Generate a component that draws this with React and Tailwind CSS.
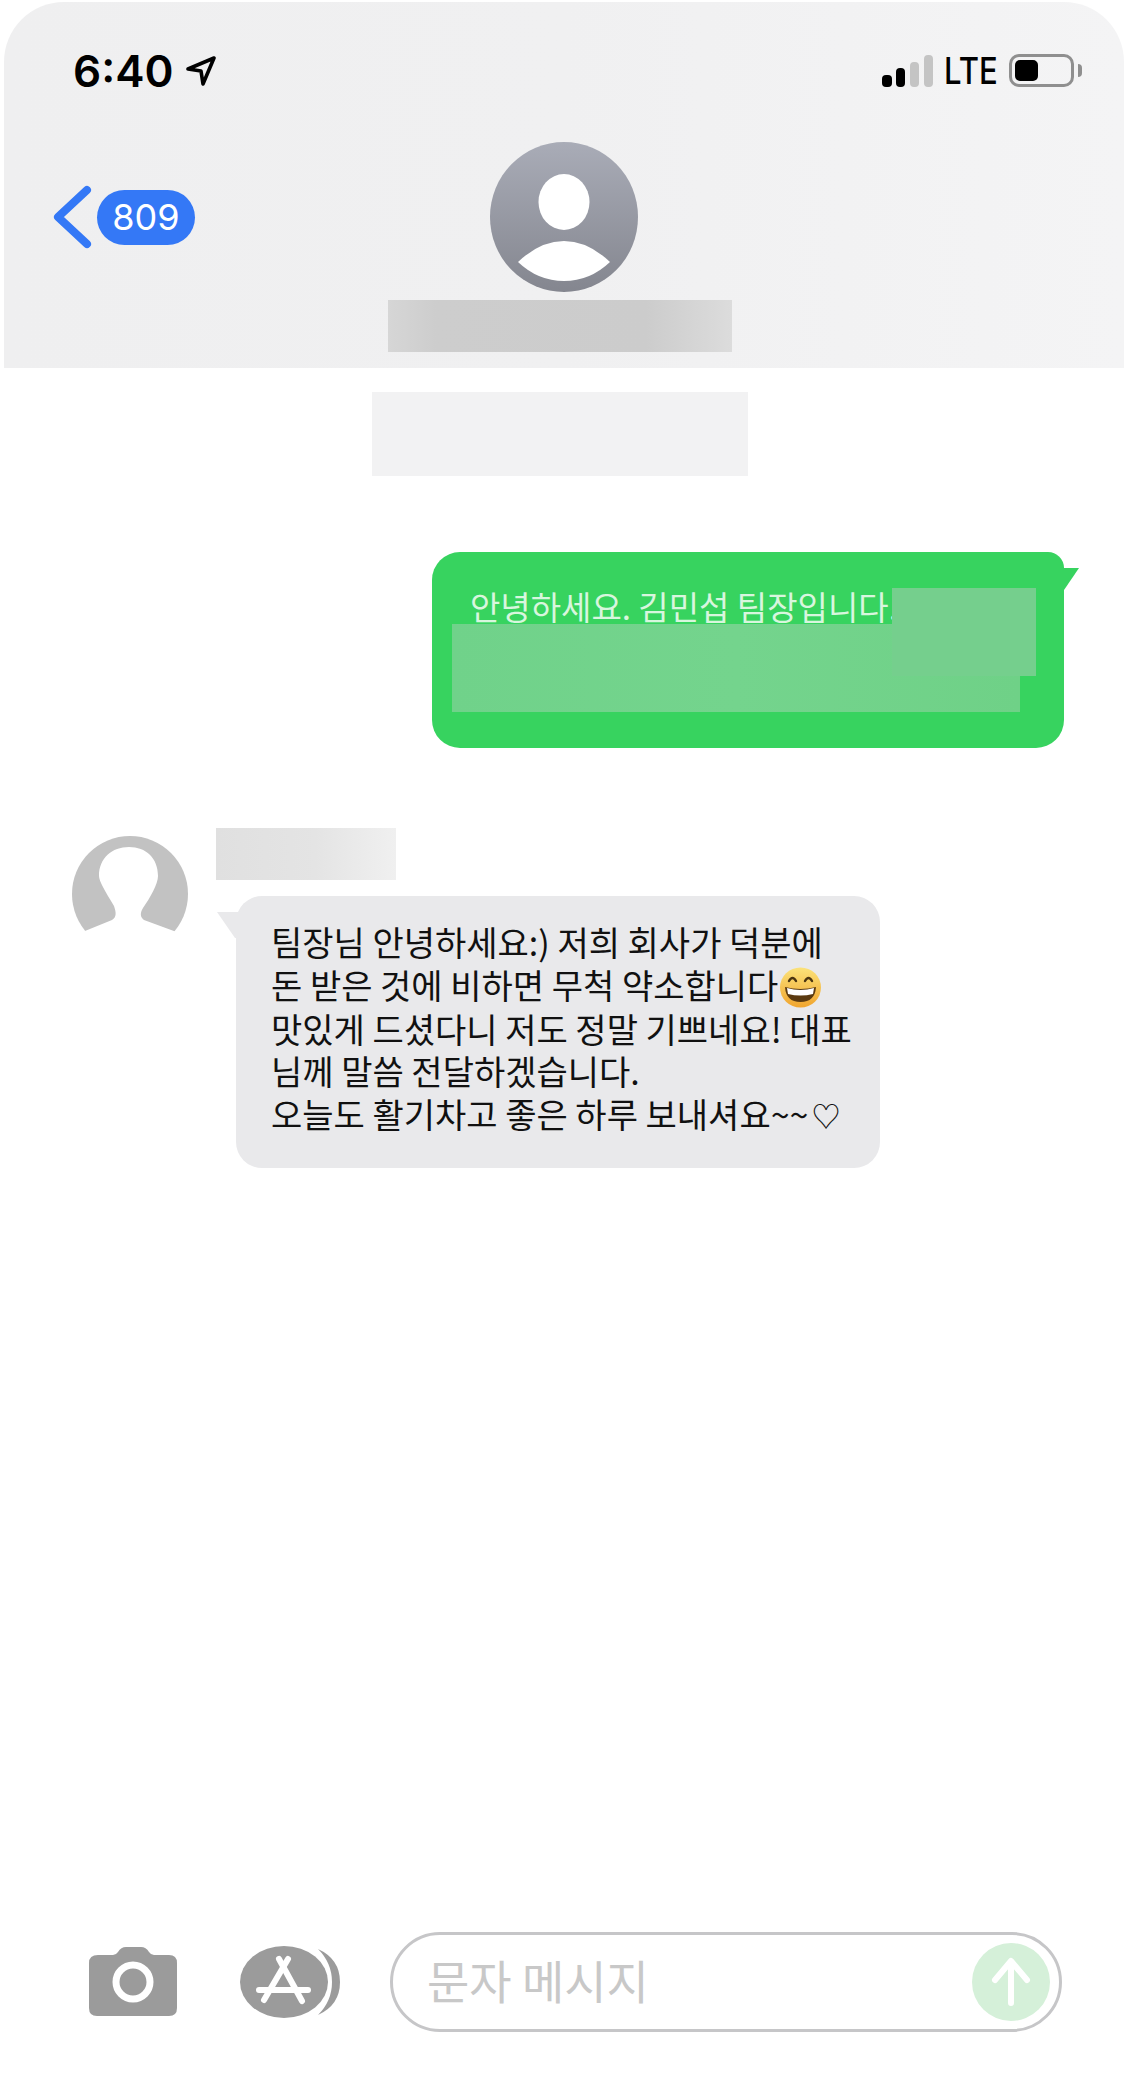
import React from "react";

const KR = "font-['Noto_Sans_CJK_KR','Noto_Sans',sans-serif]";

function Emoji() {
  return (
    <svg width="43" height="41" viewBox="0 0 43 41" className="inline-block align-[-9px] ml-[1px]">
      <defs>
        <linearGradient id="emo" x1="0" y1="0" x2="0" y2="1">
          <stop offset="0" stopColor="#fbe27a" />
          <stop offset="1" stopColor="#f0a52e" />
        </linearGradient>
      </defs>
      <ellipse cx="21.5" cy="20.5" rx="20.5" ry="20" fill="url(#emo)" />
      <path d="M10 14 Q13.5 8 17 14 M26 14 Q29.5 8 33 14" fill="none" stroke="#4a3410" strokeWidth="2.4" strokeLinecap="round" />
      <path d="M6 20 Q21.5 24 37 20 Q36 35 21.5 35 Q7 35 6 20Z" fill="#5b3a10" />
      <path d="M8 21 Q21.5 25 35 21 L34 27 Q21.5 30 9 27Z" fill="#ffffff" />
    </svg>
  );
}

export default function App() {
  return (
    <div className={`flex flex-col w-[1124px] h-[2088px] bg-white ${KR}`}>
      {/* Header */}
      <header className="ml-[4px] mt-[2px] h-[366px] rounded-t-[60px] bg-[linear-gradient(90deg,#efeff0,#f0f0f1_50%,#f4f4f5)] flex flex-col">
        <div className="flex justify-between items-start pt-[46px] pl-[69px] pr-[42px] h-[96px]">
          <div className="flex items-center gap-[12px]">
            <span className="font-['Inter',sans-serif] font-semibold text-[44px] leading-[46px] text-black">6:40</span>
            <svg width="30" height="30" viewBox="0 0 30 30">
              <path d="M2 13 L28 2 L17 28 L15 15Z" fill="none" stroke="#000" strokeWidth="3.6" strokeLinejoin="round" />
            </svg>
          </div>
          <div className="flex items-end h-[36px] mt-[3px]">
            <svg width="54" height="33" viewBox="0 0 54 33" className="mr-[10px]">
              <rect x="0" y="21" width="10" height="12" rx="4" fill="#000" />
              <rect x="14" y="14" width="9" height="19" rx="4" fill="#000" />
              <rect x="28" y="8" width="9" height="25" rx="4" fill="#c4c4c4" />
              <rect x="42" y="1" width="9" height="32" rx="4" fill="#c4c4c4" />
            </svg>
            <span className="font-['Inter',sans-serif] font-medium text-[37px] leading-[36px] text-black scale-x-[0.84] origin-left w-[63px] mb-[-2px] ml-[-2px] mr-[2px]">LTE</span>
            <div className="flex items-center">
              <div className="w-[65px] h-[33px] rounded-[10px] border-[3px] border-[#8f8f8f] p-[3px] flex">
                <div className="w-[23px] h-full rounded-[5px] bg-black" />
              </div>
              <div className="ml-[4px] w-[4px] h-[13px] rounded-r-full bg-[#8f8f8f]" />
            </div>
          </div>
        </div>
        <div className="grid grid-cols-[1fr_148px_1fr] items-center mt-[44px]">
          <div className="flex items-center pl-[49px]">
            <svg width="40" height="66" viewBox="0 0 40 66">
              <path d="M34 6 L5 33 L34 60" fill="none" stroke="#3478f6" strokeWidth="8" strokeLinecap="round" strokeLinejoin="round" />
            </svg>
            <div className="ml-[4px] w-[98px] h-[55px] rounded-full bg-[#3478f6] flex items-center justify-center font-['Inter',sans-serif] font-normal text-[36px] leading-none text-white">809</div>
          </div>
          <svg width="148" height="150" viewBox="0 0 148 150">
            <defs>
              <linearGradient id="av" x1="0" y1="0" x2="0" y2="1">
                <stop offset="0" stopColor="#a9acb7" />
                <stop offset="1" stopColor="#84868f" />
              </linearGradient>
            </defs>
            <ellipse cx="74" cy="75" rx="74" ry="75" fill="url(#av)" />
            <ellipse cx="74" cy="60" rx="25.5" ry="28" fill="#fff" />
            <path d="M28 120 Q50 99 74 99 Q98 99 120 120 Q100 139 74 139 Q48 139 28 120Z" fill="#fff" />
          </svg>
          <div />
        </div>
        <div className="flex justify-center pr-[8px] mt-[8px]">
          <div className="w-[344px] h-[52px] bg-[linear-gradient(90deg,#d6d6d6,#cdcdcd_14%,#cccccc_75%,#dcdcdc)]" />
        </div>
      </header>

      {/* Date, redacted */}
      <div className="ml-[372px] mt-[24px] w-[376px] h-[84px] bg-[#f2f2f3]" />

      {/* Sent */}
      <div className="relative ml-[432px] mt-[76px] w-[632px] h-[196px] rounded-[28px] rounded-tr-[16px] bg-[#37d35f] pt-[32px] pl-[38px]">
        <p className="text-[33px] leading-[44px] text-[#d8f6de] whitespace-nowrap">안녕하세요. 김민섭 팀장입니다.</p>
        <svg width="20" height="24" viewBox="0 0 20 24" className="absolute left-[629px] top-[16px]">
          <path d="M0 0 H18 L3 22 H0Z" fill="#37d35f" />
        </svg>
        <div className="absolute left-[20px] top-[72px] w-[568px] h-[88px] bg-[linear-gradient(90deg,#70d28a,#74d48d_50%,#6fd187)]" />
        <div className="absolute left-[460px] top-[36px] w-[144px] h-[88px] bg-[#75cf8d]" />
      </div>

      {/* Received */}
      <div className="flex mt-[80px] ml-[72px]">
        <svg width="116" height="130" viewBox="0 0 116 130" className="mt-[8px]">
          <circle cx="58" cy="58" r="58" fill="#c2c2c2" />
          <path d="M8 97 L40 84 C45 81 44 76 42 70 C33 55 27 45 27 40 C27 22 40 11 57 11 C74 11 86 22 86 40 C86 48 78 62 71 72 C68 77 68 81 72 84 L110 98 L116 130 L0 130Z" fill="#fff" />
        </svg>
        <div className="ml-[28px] flex flex-col">
          <div className="w-[180px] h-[52px] bg-[linear-gradient(90deg,#e0e0e0,#e4e4e4_55%,#f0f0f0)]" />
          <div className="relative ml-[20px] mt-[16px] w-[644px] h-[272px] rounded-[26px] bg-[#e9e9eb] pt-[25px] pl-[35px] text-[#111111] text-[34px] leading-[42.7px] whitespace-nowrap">
            <svg width="24" height="26" viewBox="0 0 24 26" className="absolute left-[-19px] top-[16px]">
              <path d="M0 0 H24 V26 H18Z" fill="#e9e9eb" />
            </svg>
            <div>팀장님 안녕하세요:) 저희 회사가 덕분에</div>
            <div>돈 받은 것에 비하면 무척 약소합니다<Emoji /></div>
            <div>맛있게 드셨다니 저도 정말 기쁘네요! 대표</div>
            <div>님께 말씀 전달하겠습니다.</div>
            <div>오늘도 활기차고 좋은 하루 보내셔요~~<span className="text-[29px] ml-[3px]">♡</span></div>
          </div>
        </div>
      </div>

      {/* Toolbar */}
      <div className="mt-auto mb-[56px] flex items-center pl-[89px]">
        <svg width="88" height="70" viewBox="0 0 88 70">
          <path d="M9 8 H24 Q27 8 29 5 Q32 0 37 0 H52 Q57 0 60 5 Q62 8 65 8 H80 Q88 8 88 16 V61 Q88 69 80 69 H8 Q0 69 0 61 V16 Q0 8 9 8Z" fill="#9b9b9b" />
          <circle cx="44" cy="35" r="17" fill="none" stroke="#fff" strokeWidth="7" />
        </svg>
        <svg width="102" height="74" viewBox="0 0 102 74" className="ml-[63px]">
          <ellipse cx="44" cy="37" rx="44" ry="36" fill="#9b9b9b" />
          <path d="M78 4 Q100 14 100 37 Q100 60 78 70 Q92 56 92 37 Q92 18 78 4Z" fill="#9b9b9b" />
          <g fill="none" stroke="#fff" strokeWidth="6" strokeLinecap="round">
            <path d="M39 14 L62 56" />
            <path d="M48 14 L24 55" />
            <path d="M19 45 H68" />
          </g>
        </svg>
        <div className="relative ml-[48px] w-[672px] h-[100px] rounded-full border-[3px] border-[#c6c6c8] flex items-center pl-[34px]">
          <span className="text-[46px] leading-none text-[#c8c8c8] mt-[-6px]">문자 메시지</span>
          <svg width="78" height="78" viewBox="0 0 78 78" className="absolute right-[9px] top-[8px]">
            <circle cx="39" cy="39" r="39" fill="#d5f0d9" />
            <path d="M39 60 V20 M23 37 L39 18 L55 37" fill="none" stroke="#fff" strokeWidth="6" strokeLinecap="round" strokeLinejoin="round" />
          </svg>
        </div>
      </div>
    </div>
  );
}
